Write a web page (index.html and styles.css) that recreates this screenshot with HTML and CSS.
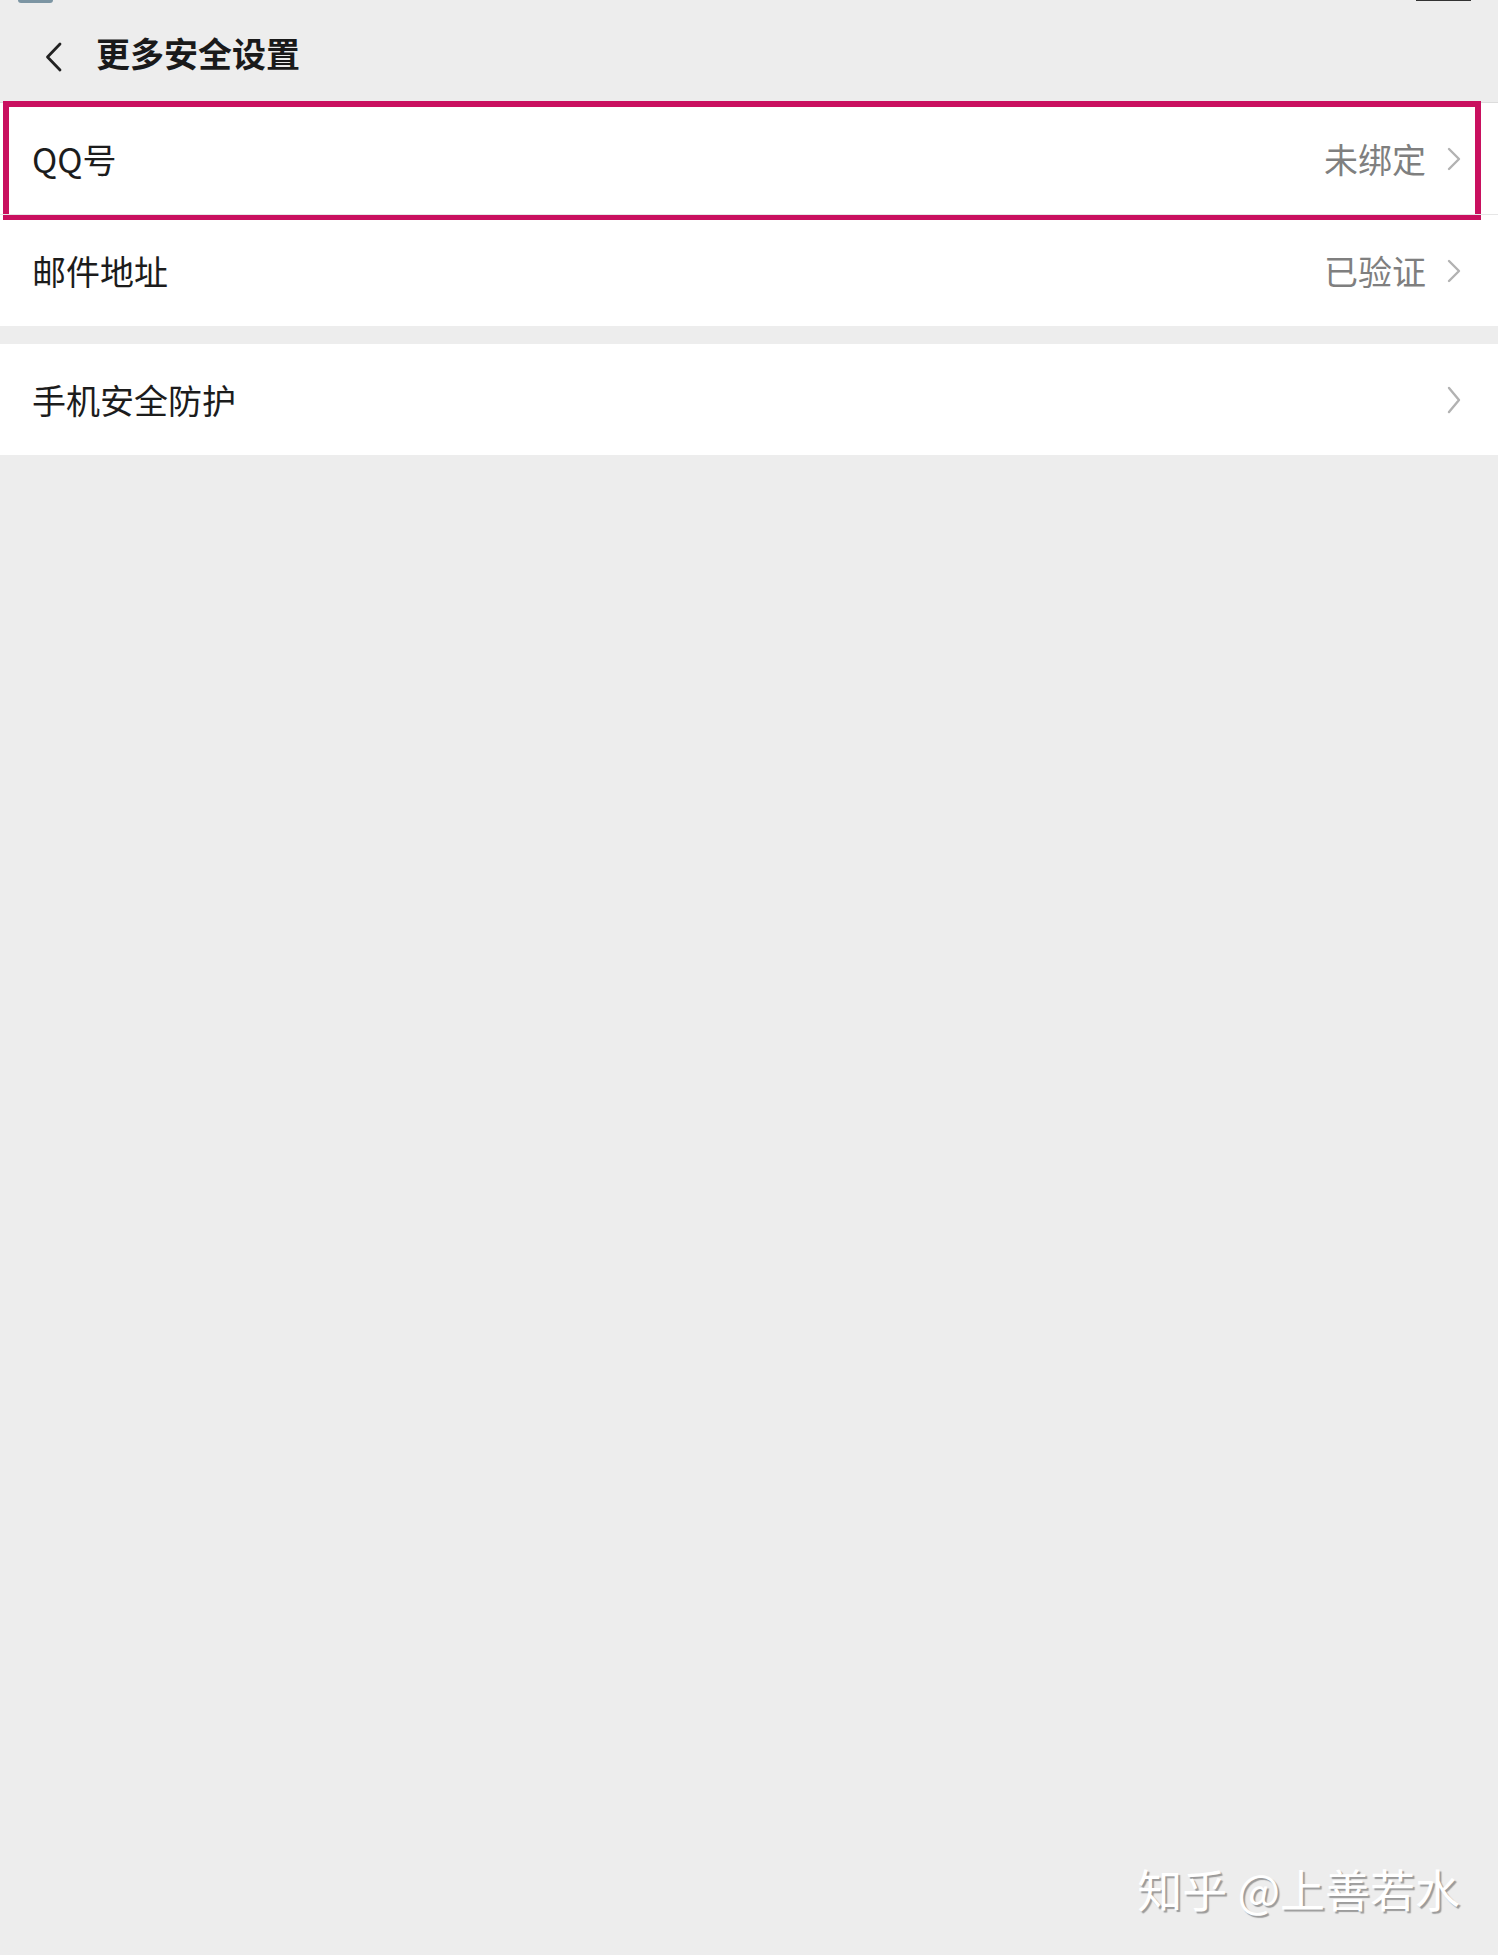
FILE: index.html
```html
<!DOCTYPE html>
<html lang="zh-CN">
<head>
    <meta charset="UTF-8">
    <meta name="viewport" content="width=device-width, initial-scale=1.0">
    <title>更多安全设置</title>
    <link rel="stylesheet" href="styles.css">
</head>
<body>
    <div class="page">
        <div class="status-bar">
            <span class="status-left"></span>
            <span class="status-right"></span>
        </div>

        <div class="header">
            <span class="back">
                <svg width="20" height="30" viewBox="0 0 20 30">
                    <path d="M16 2 L3.5 15 L16 28" fill="none" stroke="#222" stroke-width="2.8" stroke-linecap="round" stroke-linejoin="round"/>
                </svg>
            </span>
            <span class="title">更多安全设置</span>
        </div>

        <div class="group">
            <div class="row row-marked">
                <span class="label">QQ号</span>
                <span class="value">未绑定</span>
                <span class="arrow">
                    <svg width="16" height="24" viewBox="0 0 16 24">
                        <path d="M3 2 L13 12 L3 22" fill="none" stroke="#b2b2b2" stroke-width="2.4" stroke-linecap="round" stroke-linejoin="round"/>
                    </svg>
                </span>
            </div>
            <div class="row">
                <span class="label">邮件地址</span>
                <span class="value">已验证</span>
                <span class="arrow">
                    <svg width="16" height="24" viewBox="0 0 16 24">
                        <path d="M3 2 L13 12 L3 22" fill="none" stroke="#b2b2b2" stroke-width="2.4" stroke-linecap="round" stroke-linejoin="round"/>
                    </svg>
                </span>
            </div>
        </div>

        <div class="group">
            <div class="row">
                <span class="label">手机安全防护</span>
                <span class="arrow">
                    <svg width="16" height="28" viewBox="0 0 16 28">
                        <path d="M3 2 L13 14 L3 26" fill="none" stroke="#b2b2b2" stroke-width="2.4" stroke-linecap="round" stroke-linejoin="round"/>
                    </svg>
                </span>
            </div>
        </div>

        <div class="watermark">知乎 @上善若水</div>
    </div>
</body>
</html>
```

FILE: styles.css
```css
body {
    margin: 0;
    background-color: #ededed;
    font-family: "Noto Sans CJK SC", "Noto Sans", sans-serif;
    color: #1c1c1c;
}

.page {
    min-height: 100vh;
    display: flex;
    flex-direction: column;
}

/* cut-off status bar at the very top */
.status-bar {
    height: 3px;
    display: flex;
    justify-content: space-between;
    padding: 0 27px 0 18px;
}

.status-left {
    width: 35px;
    height: 3px;
    background-color: #7c95a3;
    border-radius: 0 0 6px 6px;
}

.status-right {
    width: 55px;
    height: 1px;
    background-color: #333;
}

.header {
    height: 91px;
    padding-top: 8px;
    display: flex;
    align-items: center;
    border-bottom: 1px solid #dcdcdc;
}

.back {
    display: flex;
    margin-left: 44px;
    width: 20px;
}

.title {
    margin-left: 32px;
    margin-bottom: 8px;
    font-size: 34px;
    font-weight: bold;
    color: #1a1a1a;
}

.group {
    background-color: #fff;
    margin-bottom: 18px;
}

.row {
    height: 111px;
    display: flex;
    align-items: center;
    padding: 0 36px 0 32px;
    position: relative;
}

.row + .row {
    border-top: 1px solid #e6e6e6;
}

.label {
    flex: 1;
    font-size: 34px;
}

.value {
    font-size: 34px;
    color: #7f7f7f;
}

.arrow {
    display: flex;
    margin-left: 20px;
}

/* red annotation box drawn over the first row */
.row-marked::after {
    content: "";
    position: absolute;
    left: 3px;
    right: 17px;
    top: -2px;
    bottom: -6px;
    border: 6px solid #c9105f;
    box-sizing: border-box;
    pointer-events: none;
}

.watermark {
    margin-top: auto;
    align-self: flex-end;
    margin-right: 38px;
    margin-bottom: 44px;
    font-size: 45px;
    line-height: 1;
    color: #fff;
    text-shadow: 2px 2px 1px rgba(0, 0, 0, 0.35);
}
```
